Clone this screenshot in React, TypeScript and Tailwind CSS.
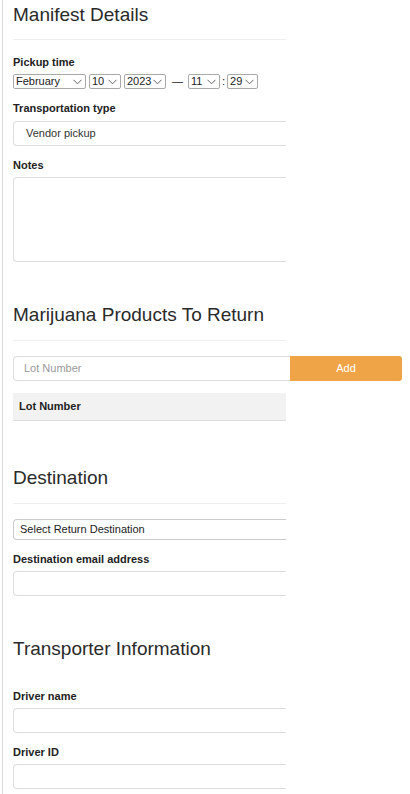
import React from 'react';

const font = { fontFamily: '"Liberation Sans", Arial, sans-serif' };

function Chevron() {
  return (
    <svg width="9" height="6" viewBox="0 0 9 6" className="shrink-0">
      <path d="M0.5 0.8 L4.5 4.8 L8.5 0.8" fill="none" stroke="#555" strokeWidth="0.9" />
    </svg>
  );
}

function MiniSelect({ value, width }: { value: string; width: string }) {
  return (
    <div className={`${width} h-[15px] flex items-center justify-between border border-[#a9a9a9] rounded-[2px] pl-[2px] pr-[3px] text-[11px] leading-none text-[#222] bg-white`}>
      <span>{value}</span>
      <Chevron />
    </div>
  );
}

function Label({ children, className }: { children: React.ReactNode; className: string }) {
  return <p className={`${className} h-[16px] leading-[16px] text-[11px] font-bold text-[#222]`}>{children}</p>;
}

function Heading({ children, className }: { children: React.ReactNode; className: string }) {
  return <h2 className={`${className} h-[30px] leading-[30px] text-[19px] text-[#2a2a2a]`}>{children}</h2>;
}

function Field({ className, height = 'h-[25px]' }: { className: string; height?: string }) {
  return <div className={`${className} ${height} w-full border border-r-0 border-[#ddd] rounded-l-[4px] bg-white`} />;
}

export default function App() {
  return (
    <div style={font} className="min-h-[794px] bg-white">
      <div className="ml-[2px] min-h-[794px] border-l border-[#d9d9d9] pl-[10px] overflow-hidden">
        <div className="w-[273px]">
          <Heading className="mt-0">Manifest Details</Heading>
          <hr className="mt-[9px] border-t border-[#eee]" />

          <Label className="mt-[14px]">Pickup time</Label>
          <div className="mt-[4px] h-[15px] flex items-center leading-none">
            <MiniSelect value="February" width="w-[73px]" />
            <div className="ml-[3px]"><MiniSelect value="10" width="w-[32px]" /></div>
            <div className="ml-[3px]"><MiniSelect value="2023" width="w-[42px]" /></div>
            <span className="ml-[6px] text-[11px] text-[#222]">—</span>
            <div className="ml-[5px]"><MiniSelect value="11" width="w-[32px]" /></div>
            <span className="ml-[2px] mr-[2px] text-[11px] text-[#222]">:</span>
            <MiniSelect value="29" width="w-[31px]" />
          </div>

          <Label className="mt-[11px]">Transportation type</Label>
          <div className="mt-[5px] h-[25px] w-full flex items-center pl-[12px] border border-r-0 border-[#ddd] rounded-l-[4px] text-[11px] text-[#333]">
            Vendor pickup
          </div>

          <Label className="mt-[11px]">Notes</Label>
          <Field className="mt-[4px]" height="h-[85px]" />

          <Heading className="mt-[38px]">Marijuana Products To Return</Heading>
          <hr className="mt-[10px] border-t border-[#eee]" />

          <div className="mt-[15px] flex h-[25px] w-[389px]">
            <div className="w-[277px] h-full flex items-center pl-[10px] border border-r-0 border-[#ddd] rounded-l-[4px] text-[11px] text-[#999]">
              Lot Number
            </div>
            <button className="w-[112px] h-full rounded-r-[3px] bg-[#eea447] text-white text-[11px]">Add</button>
          </div>

          <div className="mt-[12px] h-[28px] flex items-center pl-[6px] bg-[#f2f2f2] border-b border-[#ddd] text-[11px] font-bold text-[#222]">
            Lot Number
          </div>

          <Heading className="mt-[42px]">Destination</Heading>
          <hr className="mt-[10px] border-t border-[#eee]" />

          <div className="mt-[15px] h-[21px] w-full flex items-center pl-[6px] border border-r-0 border-[#ccc] rounded-l-[4px] text-[11px] text-[#222]">
            Select Return Destination
          </div>

          <Label className="mt-[11px]">Destination email address</Label>
          <Field className="mt-[4px]" />

          <Heading className="mt-[38px]">Transporter Information</Heading>

          <Label className="mt-[24px]">Driver name</Label>
          <Field className="mt-[4px]" />

          <Label className="mt-[11px]">Driver ID</Label>
          <Field className="mt-[4px]" />
        </div>
      </div>
    </div>
  );
}
